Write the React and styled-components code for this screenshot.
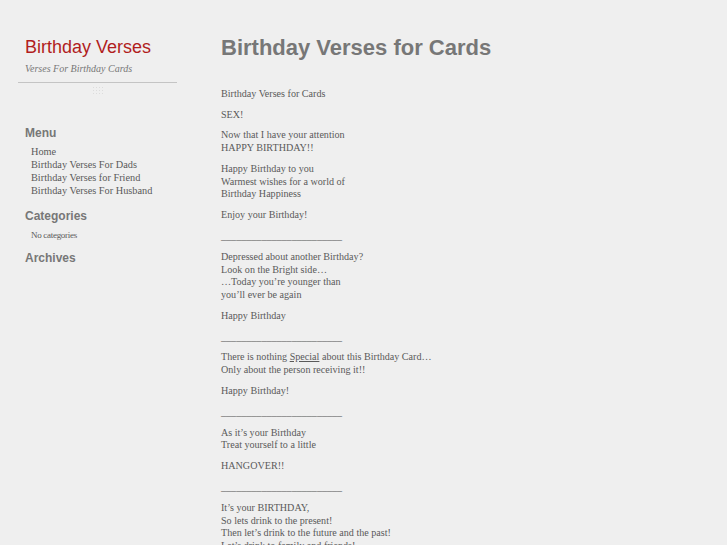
import React from "react";
import styled, { createGlobalStyle } from "styled-components";

const GlobalStyle = createGlobalStyle`
  html, body {
    margin: 0;
    padding: 0;
    background: #efefef;
  }
`;

const menu = [
  "Home",
  "Birthday Verses For Dads",
  "Birthday Verses for Friend",
  "Birthday Verses For Husband",
];

const RULE = "________________________";

export default function App() {
  return (
    <>
      <GlobalStyle />
      <Page>
        <Sidebar>
          <Header>
            <SiteTitle>Birthday Verses</SiteTitle>
            <Tagline>Verses For Birthday Cards</Tagline>
          </Header>
          <Dots />

          <WidgetTitle $top={31}>Menu</WidgetTitle>
          <LinkList>
            {menu.map((m) => (
              <LinkItem key={m}>{m}</LinkItem>
            ))}
          </LinkList>

          <WidgetTitle $top={10}>Categories</WidgetTitle>
          <Small>No categories</Small>

          <WidgetTitle $top={9}>Archives</WidgetTitle>
        </Sidebar>

        <Main>
          <PageTitle>Birthday Verses for Cards</PageTitle>
          <Entry>
            <P>Birthday Verses for Cards</P>
            <P>SEX!</P>
            <P>
              Now that I have your attention<br />HAPPY BIRTHDAY!!
            </P>
            <P>
              Happy Birthday to you<br />Warmest wishes for a world of
              <br />Birthday Happiness
            </P>
            <P>Enjoy your Birthday!</P>
            <P>{RULE}</P>
            <P>
              Depressed about another Birthday?<br />Look on the Bright side…
              <br />…Today you’re younger than<br />you’ll ever be again
            </P>
            <P>Happy Birthday</P>
            <P>{RULE}</P>
            <P>
              There is nothing <Under>Special</Under> about this Birthday Card…
              <br />Only about the person receiving it!!
            </P>
            <P>Happy Birthday!</P>
            <P>{RULE}</P>
            <P>
              As it’s your Birthday<br />Treat yourself to a little
            </P>
            <P>HANGOVER!!</P>
            <P>{RULE}</P>
            <P>
              It’s your BIRTHDAY,<br />So lets drink to the present!
              <br />Then let’s drink to the future and the past!
              <br />Let’s drink to family and friends!
            </P>
          </Entry>
        </Main>
      </Page>
    </>
  );
}

const Page = styled.div`
  display: flex;
  align-items: flex-start;
  padding: 34px 0 0 18px;
  height: 545px;
  box-sizing: border-box;
  overflow: hidden;
`;

const Sidebar = styled.aside`
  width: 159px;
  flex-shrink: 0;
`;

const Header = styled.div`
  padding: 2px 0 6px 7px;
  border-bottom: 1px solid #c4c4c4;
`;

const SiteTitle = styled.div`
  font-family: "Liberation Sans", Arial, sans-serif;
  font-size: 18px;
  line-height: 22px;
  color: #b11d1d;
`;

const Tagline = styled.div`
  margin-top: 4px;
  font-family: "Liberation Serif", serif;
  font-style: italic;
  font-size: 10px;
  line-height: 14px;
  color: #777;
`;

const Dots = styled.div`
  width: 12px;
  height: 8px;
  margin: 3px 0 0 74px;
  background-image: radial-gradient(#dcdcdc 0.6px, transparent 0.8px);
  background-size: 3px 3px;
`;

const WidgetTitle = styled.h3`
  margin: ${(p) => p.$top}px 0 0 7px;
  font-family: "Liberation Sans", Arial, sans-serif;
  font-weight: bold;
  font-size: 12px;
  line-height: 16px;
  color: #777;
`;

const LinkList = styled.ul`
  list-style: none;
  margin: 3.5px 0 0 13px;
  padding: 0;
`;

const LinkItem = styled.li`
  font-family: "Liberation Serif", serif;
  font-size: 10.3px;
  line-height: 13.3px;
  color: #5a5a5a;
`;

const Small = styled.div`
  margin: 5px 0 0 13px;
  font-family: "Liberation Serif", serif;
  font-size: 9px;
  line-height: 12px;
  letter-spacing: -0.3px;
  color: #5a5a5a;
`;

const Main = styled.main`
  margin: 1px 0 0 44px;
  flex: 1;
`;

const PageTitle = styled.h1`
  margin: 0;
  font-family: "Liberation Sans", Arial, sans-serif;
  font-weight: bold;
  font-size: 22px;
  line-height: 26px;
  color: #777;
`;

const Entry = styled.div`
  margin-top: 26.7px;
`;

const P = styled.p`
  margin: 0 0 8.2px;
  font-family: "Liberation Serif", serif;
  font-size: 10.1px;
  line-height: 12.67px;
  color: #5a5a5a;
`;

const Under = styled.span`
  text-decoration: underline;
`;
